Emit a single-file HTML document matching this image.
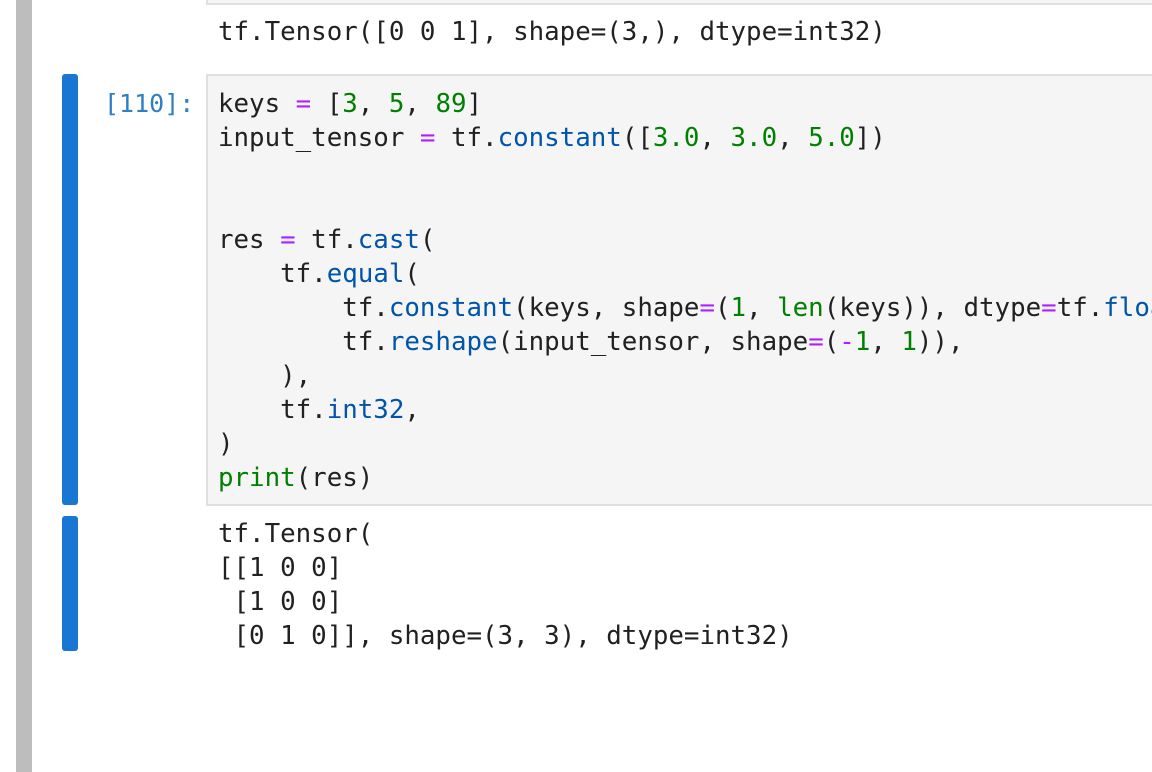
<!DOCTYPE html>
<html><head><style>
html,body{margin:0;padding:0;background:#fff;width:1152px;height:772px;overflow:hidden;position:relative}
#w{position:absolute;left:0;top:0;width:1152px;height:772px;overflow:hidden}
.g{position:absolute;left:16px;top:0;width:16px;height:772px;background:#bdbdbd}
.b{position:absolute;left:62px;width:16px;background:#1976d2;border-radius:3px}
pre{margin:0;font-family:"DejaVu Sans Mono","Liberation Mono",monospace;font-size:25.8px;line-height:34px;color:#212121;position:absolute;left:218px;right:0;overflow:hidden;white-space:pre}
.box{position:absolute;left:206px;right:-4px;background:#f5f5f5;border:2px solid #e0e0e0;box-sizing:border-box}
.o{color:#aa22ff}.n{color:#008000}.f{color:#0055aa}
.p{position:absolute;left:104px;top:87px;font-family:"DejaVu Sans Mono","Liberation Mono",monospace;font-size:25px;line-height:34px;color:#307fc1;margin:0}
</style></head><body><div id="w">
<div class="g"></div>
<div class="box" style="top:-10px;height:15px"></div>
<pre style="top:15px">tf.Tensor([0 0 1], shape=(3,), dtype=int32)</pre>
<div class="b" style="top:74px;height:431px"></div>
<div class="p">[110]:</div>
<div class="box" style="top:74px;height:432px"></div>
<pre style="top:87px">keys <span class="o">=</span> [<span class="n">3</span>, <span class="n">5</span>, <span class="n">89</span>]
input_tensor <span class="o">=</span> tf.<span class="f">constant</span>([<span class="n">3.0</span>, <span class="n">3.0</span>, <span class="n">5.0</span>])


res <span class="o">=</span> tf.<span class="f">cast</span>(
    tf.<span class="f">equal</span>(
        tf.<span class="f">constant</span>(keys, shape<span class="o">=</span>(<span class="n">1</span>, <span class="n">len</span>(keys)), dtype<span class="o">=</span>tf.<span class="f">float32</span>),
        tf.<span class="f">reshape</span>(input_tensor, shape<span class="o">=</span>(<span class="o">-</span><span class="n">1</span>, <span class="n">1</span>)),
    ),
    tf.<span class="f">int32</span>,
)
<span class="n">print</span>(res)</pre>
<div class="b" style="top:516px;height:135px"></div>
<pre style="top:517px">tf.Tensor(
[[1 0 0]
 [1 0 0]
 [0 1 0]], shape=(3, 3), dtype=int32)</pre>
</div></body></html>
